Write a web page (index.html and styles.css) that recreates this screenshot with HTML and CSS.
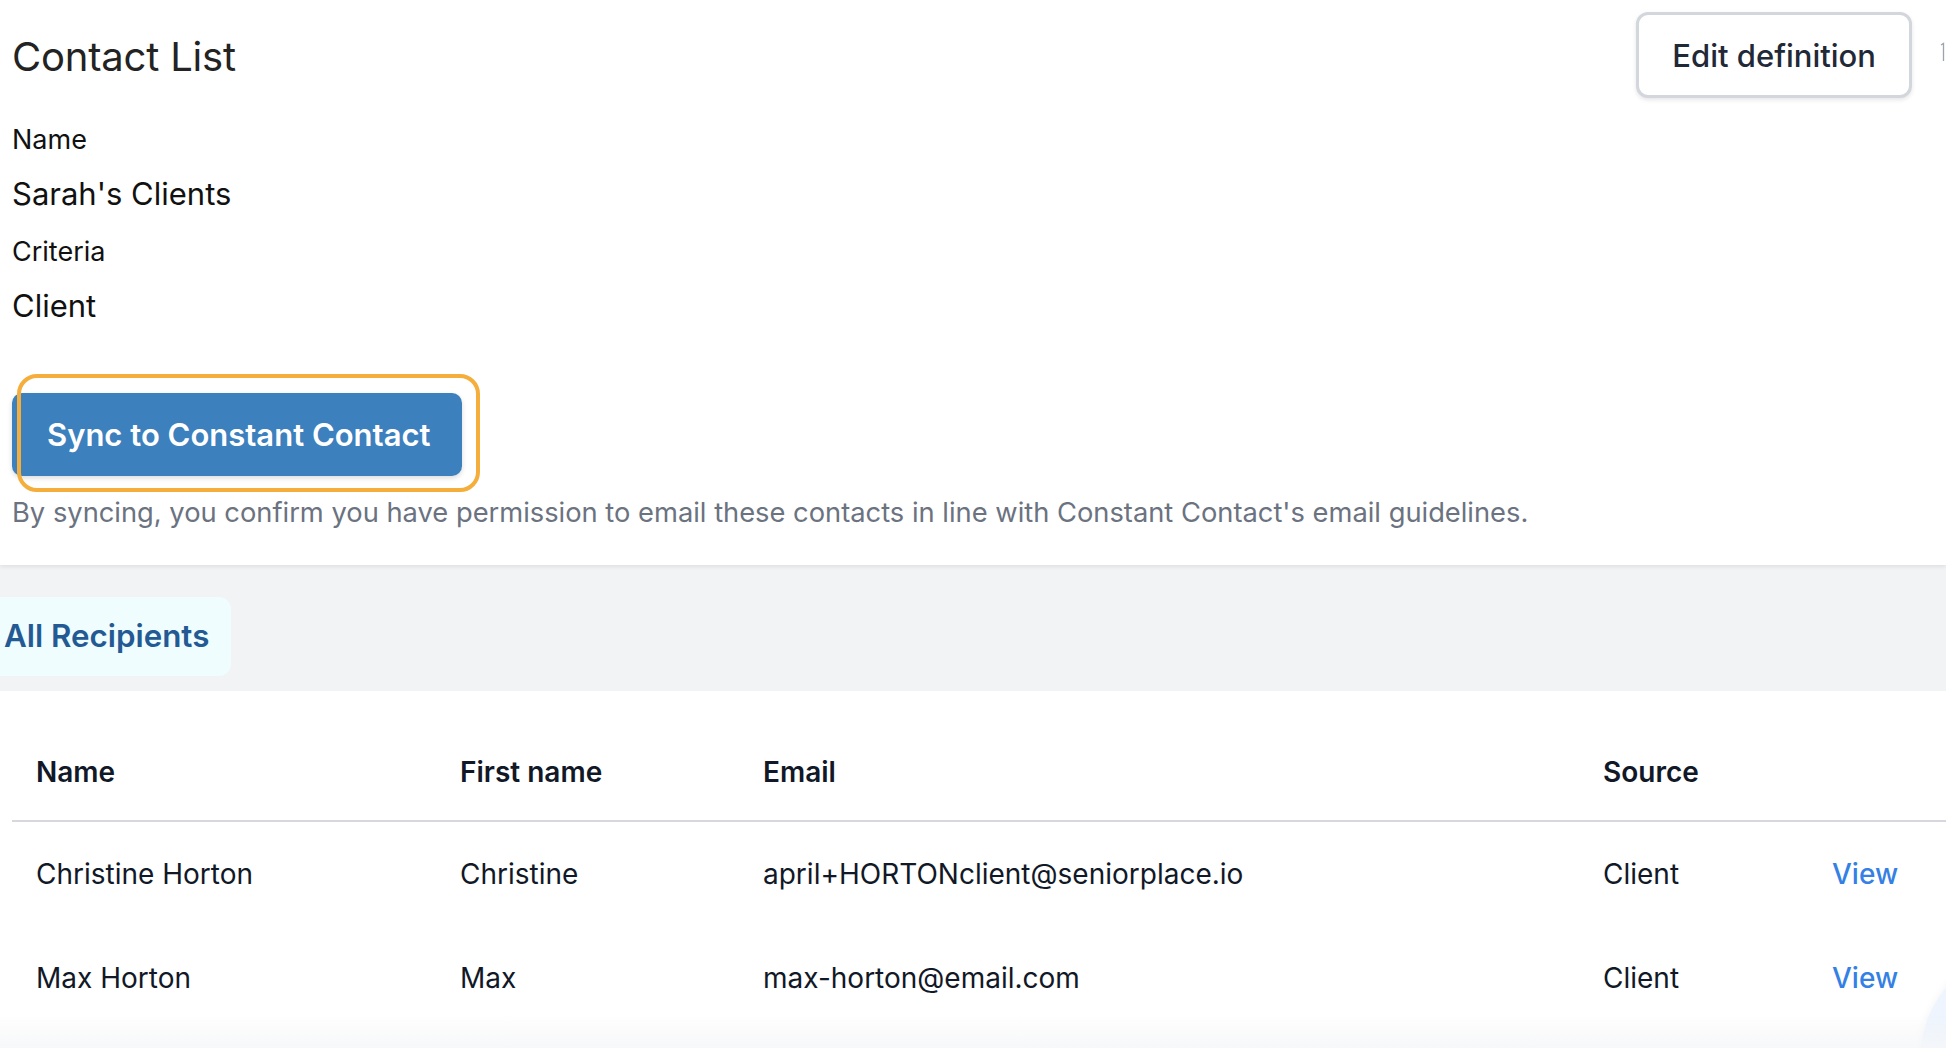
FILE: index.html
```html
<!DOCTYPE html>
<html lang="en">
<head>
<meta charset="utf-8">
<title>Contact List</title>
<link rel="stylesheet" href="styles.css">
</head>
<body>
<div class="top">
  <div class="header">
    <h1 class="title">Contact List</h1>
    <div class="header-actions">
      <button class="btn-edit">Edit definition</button>
      <span class="more-edge"><svg width="6" height="20" viewBox="0 0 6 20"><path d="M1 3 L3.5 1.5 V19" fill="none" stroke="#9ca3af" stroke-width="1.3"/></svg></span>
    </div>
  </div>
  <div class="field">
    <div class="label">Name</div>
    <div class="value">Sarah's Clients</div>
  </div>
  <div class="field">
    <div class="label">Criteria</div>
    <div class="value">Client</div>
  </div>
  <div class="sync-wrap">
    <button class="btn-sync">Sync to Constant Contact</button>
    <span class="highlight"></span>
  </div>
  <p class="disclaimer">By syncing, you confirm you have permission to email these contacts in line with Constant Contact's email guidelines.</p>
</div>
<div class="tabs">
  <div class="tab">All Recipients</div>
</div>
<div class="table">
  <div class="row head">
    <div class="cell">Name</div>
    <div class="cell">First name</div>
    <div class="cell">Email</div>
    <div class="cell">Source</div>
    <div class="cell"></div>
  </div>
  <div class="row">
    <div class="cell">Christine Horton</div>
    <div class="cell">Christine</div>
    <div class="cell">april+HORTONclient@seniorplace.io</div>
    <div class="cell">Client</div>
    <div class="cell"><a class="link" href="#">View</a></div>
  </div>
  <div class="row">
    <div class="cell">Max Horton</div>
    <div class="cell">Max</div>
    <div class="cell">max-horton@email.com</div>
    <div class="cell">Client</div>
    <div class="cell"><a class="link" href="#">View</a></div>
  </div>
</div>
<div class="chat-bubble"></div>
<div class="bottom-fade"></div>
</body>
</html>
```

FILE: styles.css
```css
html, body {
  margin: 0;
  padding: 0;
  background: #ffffff;
  overflow: hidden;
}
body {
  font-family: Inter, "Noto Sans", "Liberation Sans", sans-serif;
  color: #111111;
  height: 1048px;
}
.top {
  background: #ffffff;
  padding: 12px 1px 34px 12px;
  box-shadow: 0 2px 4px rgba(0, 0, 0, 0.08);
  position: relative;
  z-index: 1;
}
.header {
  display: flex;
  justify-content: space-between;
  align-items: center;
}
.title {
  margin: 4px 0 0;
  font-size: 40px;
  font-weight: 400;
  color: #232323;
  letter-spacing: -0.2px;
  line-height: 46px;
}
.header-actions {
  display: flex;
  align-items: flex-start;
}
.btn-edit {
  height: 86px;
  padding: 0 33px;
  border: 3px solid #d3d6dc;
  border-radius: 12px;
  background: #ffffff;
  box-shadow: 0 2px 4px rgba(0, 0, 0, 0.10);
  font-family: inherit;
  font-size: 31px;
  font-weight: 500;
  color: #1f2937;
}
.more-edge {
  display: block;
  margin-left: 28px;
  margin-top: 30px;
  width: 5px;
  overflow: hidden;
}
.field {
  margin-top: 24px;
}
.field + .field {
  margin-top: 20px;
}
.label {
  font-size: 27px;
  line-height: 36px;
  color: #111111;
}
.value {
  margin-top: 16px;
  font-size: 31px;
  line-height: 40px;
  color: #111111;
}
.sync-wrap {
  position: relative;
  margin-top: 67px;
  display: inline-block;
}
.btn-sync {
  display: block;
  height: 83px;
  padding: 0 32px 0 35px;
  border: none;
  border-radius: 10px;
  background: #3c80be;
  color: #ffffff;
  font-family: inherit;
  font-size: 31px;
  font-weight: 600;
  box-shadow: 0 2px 5px rgba(0, 0, 0, 0.15);
}
.highlight {
  position: absolute;
  left: 5px;
  top: -19px;
  right: -18px;
  bottom: -16px;
  border: 4px solid #f5ae3c;
  border-radius: 20px;
  pointer-events: none;
}
.disclaimer {
  margin: 19px 0 0;
  font-size: 27.3px;
  line-height: 36px;
  color: #6b7280;
}
.tabs {
  background: #f2f3f5;
  padding: 32px 0 15px;
}
.tab {
  display: inline-block;
  background: #effdff;
  border-radius: 0 12px 12px 0;
  padding: 0 22px 0 4px;
  line-height: 79px;
  font-size: 31.3px;
  font-weight: 600;
  color: #245a94;
}
.table {
  margin: 33px 0 0 12px;
}
.row {
  display: grid;
  grid-template-columns: 424px 303px 840px 229px 1fr;
  align-items: center;
  height: 104px;
  font-size: 28px;
  color: #111827;
}
.row.head {
  height: 96px;
  font-weight: 600;
  border-bottom: 2px solid #d6d8de;
}
.cell {
  padding-left: 24px;
  white-space: nowrap;
}
.link {
  color: #3480e4;
  text-decoration: none;
  font-weight: 500;
}
.chat-bubble {
  position: fixed;
  left: 1920px;
  top: 946px;
  width: 228px;
  height: 228px;
  border-radius: 50%;
  background: #eef5fe;
  box-shadow: 0 0 10px rgba(0, 0, 0, 0.05);
}
.bottom-fade {
  position: fixed;
  left: 0;
  right: 0;
  bottom: 0;
  height: 34px;
  background: linear-gradient(rgba(245, 246, 248, 0), rgba(245, 246, 248, 0.8));
  pointer-events: none;
}
```
